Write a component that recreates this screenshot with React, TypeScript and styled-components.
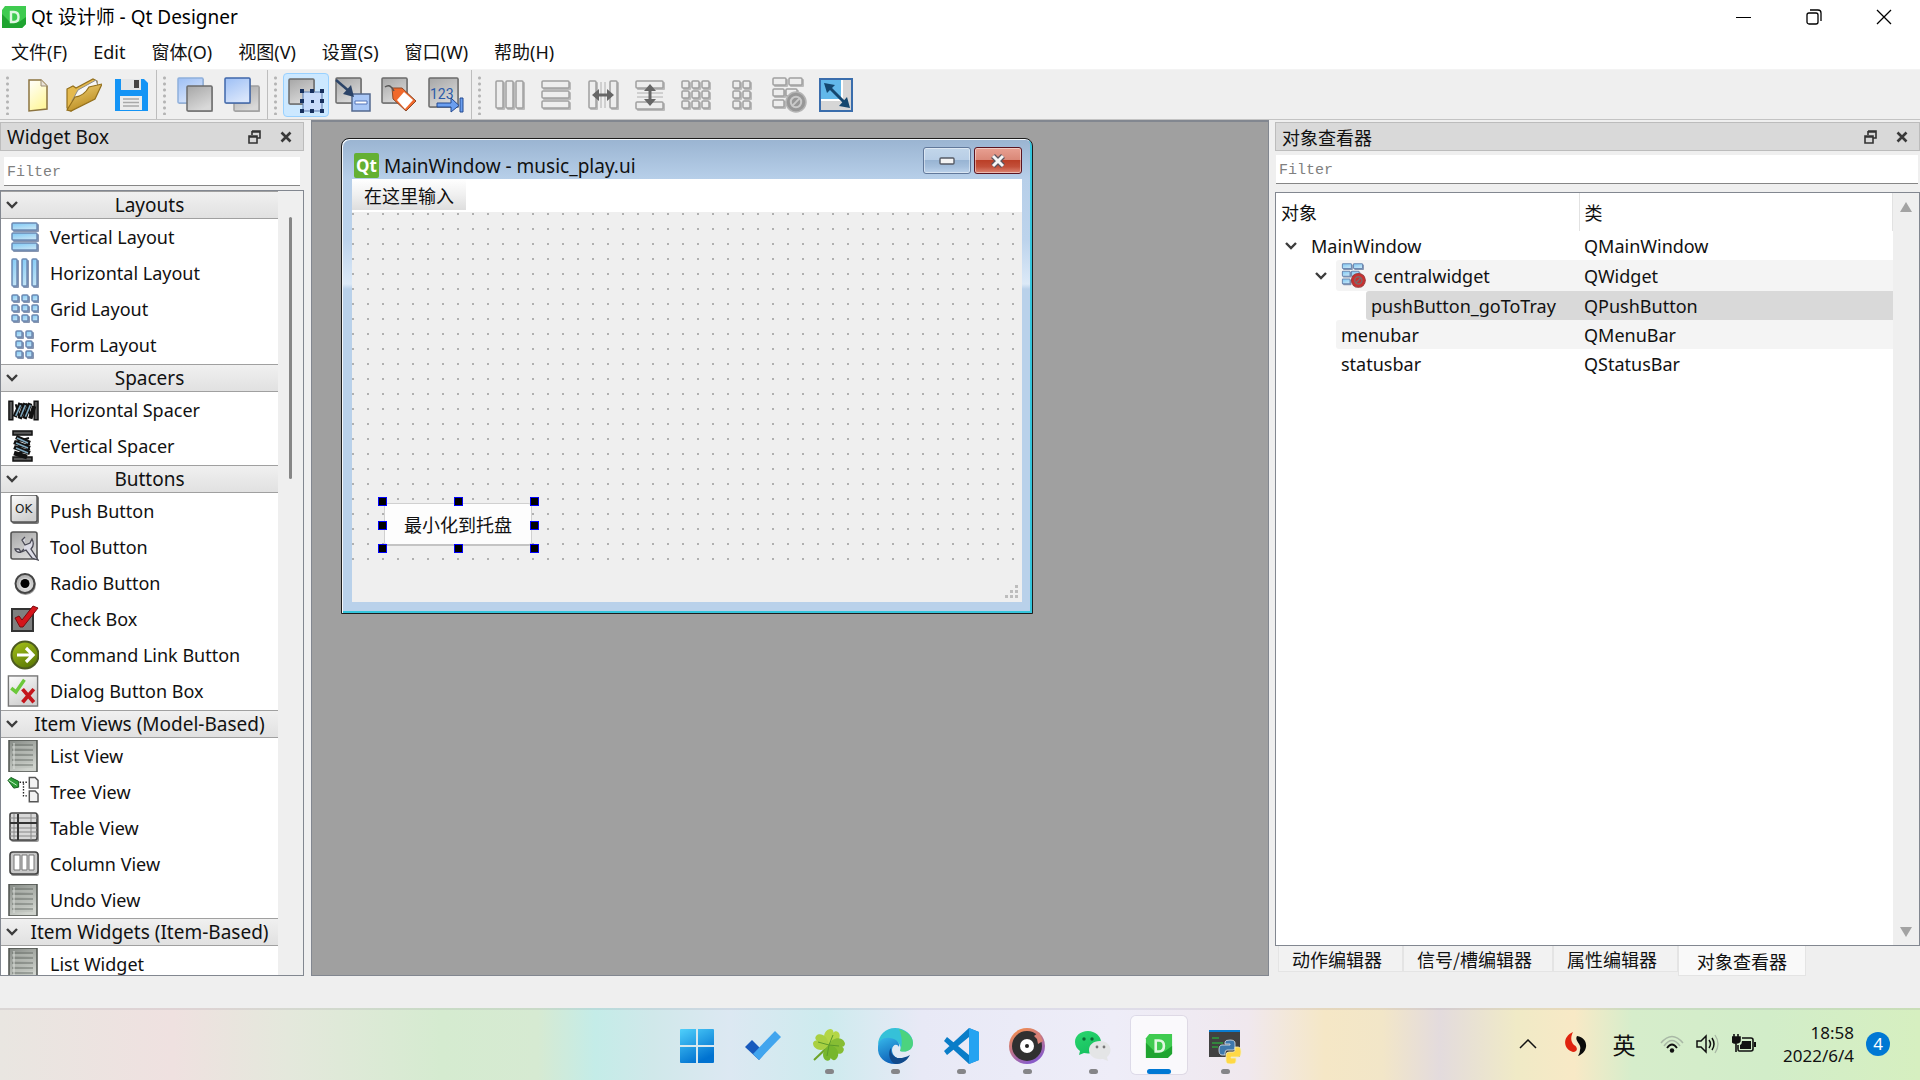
import React from "react";
import styled, { createGlobalStyle, css } from "styled-components";

const uiFont = `"Noto Sans", "Noto Sans CJK SC", sans-serif`;
const cjkFont = `"Noto Sans CJK SC", "Noto Sans", sans-serif`;

const GlobalStyle = createGlobalStyle`
  * { box-sizing: border-box; }
  body { margin: 0; font-family: ${uiFont}; font-size: 18px; line-height: 24px; color: #111; background: #efefef; }
  button, input { font: inherit; color: inherit; margin: 0; padding: 0; border: 0; background: none; }
  ul { list-style: none; margin: 0; padding: 0; }
  svg { display: block; flex: none; }
`;

const Screen = styled.div`
  display: flex;
  flex-direction: column;
  height: 100vh;
  overflow: hidden;
`;

/* ---------- title bar and menu ---------- */

const TitleBar = styled.header`
  display: flex;
  align-items: center;
  flex: none;
  height: 34px;
  padding: 0 1px 0 2px;
  background: #fff;
`;
const AppTitle = styled.h1`
  flex: 1;
  margin: 0 0 0 5px;
  font-size: 19px;
  font-weight: 400;
  color: #000;
`;
const CaptionButton = styled.button`
  display: grid;
  place-items: center;
  width: 70px;
  height: 34px;
`;
const MenuBar = styled.nav`
  display: flex;
  gap: 4px;
  flex: none;
  height: 36px;
  background: #fff;
  border-bottom: 1px solid #f3f3f3;
`;
const MenuButton = styled.button`
  padding: 0 11px;
  white-space: nowrap;
`;

/* ---------- tool bars ---------- */

const ToolBarRow = styled.div`
  display: flex;
  flex: none;
  height: 50px;
  background: #efefef;
  border-bottom: 1px solid #c3c3c3;
`;
const ToolGroup = styled.div<{ $width: number; $last?: boolean }>`
  display: flex;
  align-items: center;
  justify-content: space-between;
  width: ${(p) => p.$width}px;
  padding: 0 2px 0 6px;
  ${(p) => !p.$last && css`border-right: 1px solid #bdbdbd;`}
`;
const Grip = styled.span`
  width: 3px;
  height: 40px;
  margin-right: 5px;
  background: radial-gradient(circle, #b4b4b4 1px, transparent 2px) 0 0 / 3px 6px;
`;
const ToolButton = styled.button<{ $active?: boolean }>`
  display: grid;
  place-items: center;
  width: 46px;
  height: 44px;
  border: 1px solid transparent;
  border-radius: 4px;
  ${(p) => p.$active && css`background: #cce8ff; border-color: #99d1ff;`}
`;

/* ---------- docks ---------- */

const Workspace = styled.main`
  display: flex;
  flex: 1;
  min-height: 0;
  padding-bottom: 32px;
`;
const Dock = styled.aside<{ $width: number }>`
  display: flex;
  flex-direction: column;
  flex: none;
  width: ${(p) => p.$width}px;
  padding-top: 2px;
`;
const DockTitle = styled.div`
  display: flex;
  align-items: center;
  flex: none;
  height: 29px;
  padding: 0 2px 0 6px;
  background: #d9d9d9;
  border: 1px solid #bcbcbc;
`;
const DockName = styled.h2<{ $cjk?: boolean }>`
  flex: 1;
  margin: 0;
  font-size: ${(p) => (p.$cjk ? 18 : 19)}px;
  font-weight: 400;
  font-family: ${(p) => (p.$cjk ? cjkFont : uiFont)};
`;
const DockButton = styled.button`
  display: grid;
  place-items: center;
  width: 31px;
  height: 24px;
`;
const Filter = styled.input<{ $left?: boolean }>`
  flex: none;
  height: 29px;
  margin: ${(p) => (p.$left ? "6px 4px 4px" : "4px 2px 8px 1px")};
  padding: 2px 3px 0;
  background: #fff;
  border-bottom: 1px solid #868686;
  font-family: "Liberation Mono", monospace;
  font-size: 15px;
  &::placeholder { color: #808080; opacity: 1; }
`;
const Frame = styled.div`
  display: flex;
  flex: 1;
  min-height: 0;
  border: 1px solid #828790;
  background: #fff;
`;

const Categories = styled.div`
  flex: 1;
  overflow: hidden;
`;
const Category = styled.button`
  display: grid;
  grid-template-columns: 20px 1fr;
  align-items: center;
  width: 100%;
  height: 28px;
  padding: 0 4px;
  background: linear-gradient(#f0f0f0, #e1e1e1);
  border: solid #a0a0a0;
  border-width: 1px 0;
  font-size: 19px;
  white-space: nowrap;
`;
const WidgetList = styled.ul<{ $gap?: boolean }>`
  padding-bottom: ${(p) => (p.$gap ? 1 : 0)}px;
`;
const WidgetItem = styled.li`
  display: flex;
  align-items: center;
  gap: 11px;
  height: 36px;
  padding-left: 6px;
  white-space: nowrap;
`;
const ThinScroll = styled.div`
  width: 25px;
  padding: 26px 0 0 11px;
  background: #efefef;
  &::before { content: ""; display: block; width: 3px; height: 262px; border-radius: 2px; background: #868686; }
`;

/* ---------- form window ---------- */

const Mdi = styled.section`
  position: relative;
  flex: 1;
  margin: 0 6px 0 7px;
  background: #a0a0a0;
  border: 1px solid #828790;
  border-top-width: 2px;
`;
const FormWindow = styled.article`
  position: absolute;
  left: 29px;
  top: 16px;
  display: flex;
  flex-direction: column;
  width: 692px;
  height: 476px;
  padding: 0 10px 11px;
  border: 1px solid #1c1c1c;
  border-radius: 8px 8px 0 0;
  background: linear-gradient(#9ab4d1 0, #b7cfe9 40px, #bcd3ec 100px, #dce9f7 145px, #b9d1ea 150px);
  box-shadow: inset 1px 1px #f4f8fc, inset -2px -2px #35c5dc;
`;
const FormTitle = styled.header`
  display: flex;
  align-items: flex-end;
  flex: none;
  height: 40px;
  padding: 0 0 1px 2px;
`;
const FormName = styled.h3`
  flex: 1;
  margin: 0 0 0 5px;
  font-size: 19px;
  font-weight: 400;
`;
const FormButton = styled.button<{ $close?: boolean }>`
  display: grid;
  place-items: center;
  align-self: flex-start;
  width: 48px;
  height: 27px;
  margin: 8px 0 0 3px;
  border: 1px solid ${(p) => (p.$close ? "#5b1420" : "#61789a")};
  border-radius: 3px;
  box-shadow: inset 0 0 0 1px rgba(255, 255, 255, 0.45);
  background: ${(p) =>
    p.$close
      ? "linear-gradient(#e8a092, #da8878 46%, #bb3f27 50%, #c3503a 75%, #dd8674)"
      : "linear-gradient(#c2d6ea, #b8cee6 46%, #98b4d3 50%, #a5bfdc 75%, #bdd3eb)"};
`;
const FormMenu = styled.nav`
  display: flex;
  flex: none;
  height: 33px;
  background: #fff;
`;
const FormMenuItem = styled.button`
  height: 31px;
  padding: 0 12px;
  font-family: ${cjkFont};
  background: linear-gradient(#fff, #f0f0f0 50%, #dedede);
`;
const Canvas = styled.div`
  position: relative;
  flex: 1;
  background: #efefef radial-gradient(circle at 1px 1px, #b0b0b0 1px, transparent 1px) 0 1px / 15px 15px;
`;
const FormStatus = styled.footer`
  display: flex;
  align-items: flex-end;
  justify-content: flex-end;
  flex: none;
  height: 41px;
  padding: 3px;
  background: #efefef;
`;
const PlacedWidget = styled.div`
  position: absolute;
  left: 30px;
  top: 289px;
  display: grid;
  width: 152px;
  height: 47px;
  padding: 2px;
`;
const FormPushButton = styled.button`
  background: #fdfdfd;
  border: 1px solid #d0d0d0;
  border-bottom: 2px solid #c4c4c4;
  border-radius: 4px;
  font-family: ${cjkFont};
`;
const Handle = styled.i<{ $x: string; $y: string }>`
  position: absolute;
  left: ${(p) => p.$x};
  top: ${(p) => p.$y};
  width: 9px;
  height: 9px;
  margin: -4px;
  background: #000;
  border: 1px solid #0000ff;
`;

/* ---------- object inspector ---------- */

const TreeArea = styled.div`
  flex: 1;
`;
const Tree = styled.table`
  width: 100%;
  border-collapse: collapse;
  table-layout: fixed;
  th, td { padding: 0 0 0 5px; text-align: left; font-weight: 400; white-space: nowrap; }
  th { height: 38px; font-family: ${cjkFont}; border-right: 1px solid #e2e2e2; }
  th:first-child { width: 303px; }
`;
const TreeRow = styled.tr<{ $tint?: string; $tall?: boolean }>`
  height: ${(p) => (p.$tall ? 31 : 29)}px;
  td:first-child { padding: 0; }
  td:last-child { background: ${(p) => p.$tint ?? "transparent"}; }
`;
const NodeCell = styled.div<{ $depth: number; $tall?: boolean }>`
  display: flex;
  height: ${(p) => (p.$tall ? 31 : 29)}px;
  padding-left: ${(p) => p.$depth * 30}px;
`;
const Toggle = styled.button`
  display: grid;
  place-items: center;
  width: 30px;
`;
const NodeLabel = styled.span<{ $tint?: string }>`
  display: flex;
  align-items: center;
  gap: 8px;
  flex: 1;
  padding-left: 5px;
  border-radius: 3px 0 0 3px;
  background: ${(p) => p.$tint ?? "transparent"};
`;
const ArrowScroll = styled.div`
  display: flex;
  flex-direction: column;
  justify-content: space-between;
  align-items: center;
  width: 26px;
  padding: 9px 0 8px;
  background: #efefef;
`;
const Tabs = styled.div`
  display: flex;
  align-items: flex-start;
  flex: none;
  height: 30px;
  padding-left: 3px;
`;
const Tab = styled.button<{ $on?: boolean }>`
  height: ${(p) => (p.$on ? 30 : 26)}px;
  padding: ${(p) => (p.$on ? "0 18px" : "0 20px 0 13px")};
  background: ${(p) => (p.$on ? "#f9f9f9" : "#f2f2f2")};
  border: 1px solid #e4e4e4;
  border-top: 0;
  font-family: ${cjkFont};
  white-space: nowrap;
`;

/* ---------- task bar ---------- */

const TaskBar = styled.footer`
  display: grid;
  grid-template-columns: 1fr auto 1fr;
  flex: none;
  height: 72px;
  border-top: 2px solid rgba(90, 80, 110, 0.1);
  background: linear-gradient(90deg, #e9e6e1 0, #efe1e0 9%, #e4e8dc 15%, #d5ebd0 23%, #d6ead2 28%, #c4ece8 31%, #d0e8ea 34%, #dce8f2 38%, #cdebee 43%, #e8e9f6 48%, #eeedf8 58%, #f0e8ee 65%, #f5e7c6 69%, #f2e6c8 72%, #e3dbdd 75%, #f0eac6 79%, #f8e9c6 82%, #d6edcb 85%, #d2edc9 92%, #d6efc0 100%);
  background-origin: border-box;
`;
const Pinned = styled.div`
  display: flex;
  gap: 10px;
  padding: 6px 0 0 2px;
`;
const TaskButton = styled.button<{ $active?: boolean; $running?: boolean }>`
  display: flex;
  flex-direction: column;
  align-items: center;
  justify-content: space-between;
  width: 56px;
  height: 58px;
  padding-top: 12px;
  border-radius: 5px;
  ${(p) => p.$active && css`background: rgba(255, 255, 255, 0.7); box-shadow: 0 0 0 1px rgba(120, 110, 150, 0.14);`}
  &::after {
    content: "";
    width: ${(p) => (p.$active ? 24 : 9)}px;
    height: 5px;
    border-radius: 3px;
    background: ${(p) => (p.$active ? "#0078d4" : p.$running ? "#858588" : "transparent")};
  }
`;
const Tray = styled.div`
  display: flex;
  align-items: center;
  justify-content: flex-end;
  padding: 0 30px 2px 0;
`;
const TrayButton = styled.button<{ $w: number }>`
  display: grid;
  place-items: center;
  width: ${(p) => p.$w}px;
  height: 48px;
  font-family: ${cjkFont};
  font-size: 23px;
`;
const Clock = styled.time`
  width: 86px;
  text-align: right;
  font-size: 17px;
  line-height: 23px;
`;
const Badge = styled.span`
  width: 24px;
  height: 24px;
  margin-left: 12px;
  border-radius: 50%;
  background: #0078d4;
  color: #fff;
  font-size: 17px;
  line-height: 24px;
  text-align: center;
`;

/* ---------- drawings ---------- */

const Svg = ({ w = 32, h = w, box, children }: { w?: number; h?: number; box?: string; children: React.ReactNode }) => (
  <svg width={w} height={h} viewBox={box ?? `0 0 ${w} ${h}`} fill="none" aria-hidden="true">{children}</svg>
);

const Swatches = styled.svg`
  position: absolute;
`;
const Gradients = () => (
  <Swatches width="0" height="0" aria-hidden="true">
    <defs>
      {[
        ["gGrey", "#a6a6a6", "#d9d9d9"],
        ["gBlue", "#9dbff5", "#d8e5fb"],
        ["gSky", "#7cc8f5", "#c3e4f6"],
        ["gPale", "#fdfdfd", "#cfcfcf"],
        ["gDark", "#858a85", "#cfd3cd"],
        ["gPaper", "#ffffff", "#fff7a0"],
        ["gFold", "#f3d57c", "#b98a1e"],
        ["gWin", "#4fd0fb", "#0072d0"],
        ["gLime", "#a9c51c", "#5f7d05"],
        ["gRing", "#ff9240", "#8a5cc8"],
        ["gEdge", "#37b8ea", "#0b5cb5"],
        ["gMint", "#2ad66e", "#16c060"],
      ].map(([id, a, b]) => (
        <linearGradient key={id} id={id} x1="0" y1="0" x2="0.5" y2="1">
          <stop offset="0" stopColor={a} />
          <stop offset="1" stopColor={b} />
        </linearGradient>
      ))}
    </defs>
  </Swatches>
);

const DesignerLogo = ({ w, h }: { w: number; h: number }) => (
  <Svg w={w} h={h} box="0 0 24 22">
    <path d="M3 0H24V18L20 22H0V4Z" fill="#3fcb50" />
    <path d="M0 8L8 16H17L24 11V18L20 22H0Z" fill="#1fa430" />
    <path d="M9 6H12Q16.500 6 16.500 11T12 16H9Z" stroke="#dff7e0" strokeWidth="2.400" />
  </Svg>
);

const Chevron = () => (
  <Svg w={14} h={10}><path d="M2 2L7 7L12 2" stroke="#3c3c3c" strokeWidth="2.400" /></Svg>
);
const FloatIcon = () => (
  <Svg w={13} h={14}>
    <path d="M4 1H12V8H9M4 1V5M4 2H12M1 6H9V13H1ZM1 7H9" stroke="#333" strokeWidth="1.600" />
  </Svg>
);
const CloseIcon = () => (
  <Svg w={12} h={12}><path d="M1.500 1.500L10.500 10.500M10.500 1.500L1.500 10.500" stroke="#3a3a3a" strokeWidth="2.600" /></Svg>
);

type Cell = [number, number, number, number];
const cols: Cell[] = [[2, 2, 7, 27], [12, 2, 7, 27], [22, 2, 7, 27]];
const rows: Cell[] = [[2, 2, 27, 7], [2, 12, 27, 7], [2, 22, 27, 7]];
const grid: Cell[] = [2, 12, 22].flatMap((y) => [2, 12, 22].map((x): Cell => [x, y, 7, 7]));
const form: Cell[] = [2, 12, 22].flatMap((y) => [6, 16].map((x): Cell => [x, y, 7, 7]));
const broken: Cell[] = [[2, 1, 13, 7], [18, 1, 13, 7], [2, 12, 11, 7], [15, 12, 11, 7], [2, 23, 11, 7]];

const Cells = ({ list, blue }: { list: Cell[]; blue?: boolean }) => (
  <>
    {list.map(([x, y, w, h]) => (
      <React.Fragment key={`${x}-${y}`}>
        <rect x={x + 1} y={y + 1} width={w + 1} height={h + 1} rx="1" fill={blue ? "#5f7397" : "#a8a8a8"} opacity="0.75" />
        <rect x={x} y={y} width={w} height={h} rx="1" fill={blue ? "url(#gSky)" : "#ededed"} stroke={blue ? "#6c89b2" : "#a0a0a0"} strokeWidth="1.500" />
      </React.Fragment>
    ))}
  </>
);
const Stop = ({ x, y, r, red }: { x: number; y: number; r: number; red?: boolean }) => (
  <>
    <circle cx={x} cy={y} r={r} fill={red ? "#cc3030" : "#979797"} stroke={red ? "#9b3c3c" : "#b4b4b4"} strokeWidth="1.500" />
    <circle cx={x} cy={y} r={r * 0.52} stroke={red ? "#7d6a6a" : "#c9c9c9"} strokeWidth="2" />
    <path d={`M${x - r / 3} ${y + r / 3}L${x + r / 3} ${y - r / 3}`} stroke={red ? "#7d6a6a" : "#c9c9c9"} strokeWidth="2" />
  </>
);
const Box = ({ x, y, s, blue, dim }: { x: number; y: number; s: number; blue?: boolean; dim?: boolean }) => (
  <>
    <rect x={x + 1} y={y + 1} width={s} height={s} fill="#777" opacity="0.5" />
    <rect x={x} y={y} width={s} height={s} rx="1" fill={blue ? "url(#gBlue)" : "url(#gGrey)"} stroke={blue ? (dim ? "#8fb0dc" : "#3f67ab") : dim ? "#a0a0a0" : "#6b6b6b"} strokeWidth="1.500" />
  </>
);
const corners = [[0, 0], [10, 0], [20, 0], [0, 10], [20, 10], [0, 20], [10, 20], [20, 20]];

const icons = {
  newFile: (
    <Svg w={36}><path d="M9 3H21L27 9V32L9 34Z" fill="url(#gPaper)" stroke="#8c7440" strokeWidth="1.500" /><path d="M21 3V9H27" fill="#e8e2d8" stroke="#9a8c74" /></Svg>
  ),
  open: (
    <Svg w={36}>
      <path d="M1 12L7 9L10 11L27 2L31 4V14L5 34L1 31Z" fill="#e4b94e" stroke="#94701c" strokeWidth="1.200" />
      <path d="M6 24L12 13L30 3L32 9L12 27Z" fill="#f7f7f7" stroke="#8d8d8d" />
      <path d="M1 33L9 20Q18 19 23 10L36 7L29 22L5 34Z" fill="url(#gFold)" stroke="#94701c" strokeWidth="1.200" />
    </Svg>
  ),
  save: (
    <Svg w={36}>
      <path d="M2 2H31L35 6V34H2Z" fill="#1494f5" />
      <path d="M8 2H28V13H8Z" fill="#e3e5e7" /><path d="M21 3H26V11H21Z" fill="#444" />
      <path d="M7 19H29V33H7Z" fill="#ececec" /><path d="M10 22H26M10 25.500H26M10 29H26" stroke="#a8a8a8" strokeWidth="1.600" />
    </Svg>
  ),
  back: <Svg w={36}><Box x={1} y={1} s={25} blue dim /><Box x={10} y={9} s={25} /></Svg>,
  front: <Svg w={36}><Box x={10} y={9} s={25} dim /><Box x={1} y={1} s={25} blue /></Svg>,
  editWidgets: (
    <Svg w={36}>
      <Box x={1} y={2} s={25} />
      <rect x="15" y="15" width="19" height="19" fill="#c9dcfb" stroke="#5c7cae" />
      {corners.map(([x, y]) => <rect key={`${x}-${y}`} x={12 + x} y={12 + y} width="4" height="4" fill="#17305e" />)}
      <rect x="23" y="23" width="3" height="3" fill="#17305e" />
    </Svg>
  ),
  editSignals: (
    <Svg w={36}>
      <Box x={1} y={1} s={25} /><rect x="17" y="17" width="18" height="17" fill="#a9c7f6" stroke="#54698f" strokeWidth="1.500" /><path d="M20 24H32V27H20Z" fill="#fff" stroke="#5575b8" />
      <path d="M1 3L15 15" stroke="#2c4468" strokeWidth="2.500" /><path d="M19 20L8 17L16 8Z" fill="#2c4468" />
    </Svg>
  ),
  editBuddies: (
    <Svg w={36}>
      <Box x={1} y={1} s={25} /><path d="M11 11L21 11L35 24L25 34L12 22Z" fill="#f0692c" stroke="#8d4a2a" /><path d="M23 15L32 23L24 32L16 23Z" fill="#fff" />
      <path d="M4 10Q9 6 13 14" stroke="#555" strokeWidth="1.500" />
    </Svg>
  ),
  editTabs: (
    <Svg w={36}>
      <Box x={1} y={1} s={29} /><text x="2" y="22" fontFamily="Roboto" fontSize="14" fill="#2c5ba8">123</text>
      <path d="M9 26H23V21L31 28.500L23 35V30H9Z" fill="#6b9ff0" stroke="#23488f" /><path d="M32 21H35V35H32Z" fill="#6b9ff0" stroke="#23488f" />
    </Svg>
  ),
  layH: <Svg w={32}><Cells list={cols} /></Svg>,
  layV: <Svg w={32}><Cells list={rows} /></Svg>,
  splitH: (
    <Svg w={32}><Cells list={[[2, 2, 7, 27], [23, 2, 7, 27]]} /><path d="M14 3V29M18 3V29" stroke="#b0b0b0" /><path d="M8 16H24" stroke="#666" strokeWidth="3" /><path d="M12 10V22L5 16ZM20 10V22L27 16Z" fill="#666" /></Svg>
  ),
  splitV: (
    <Svg w={32}><Cells list={[[2, 2, 27, 7], [2, 23, 27, 7]]} /><path d="M3 14H29M3 18H29" stroke="#b0b0b0" /><path d="M16 8V24" stroke="#666" strokeWidth="3" /><path d="M10 12H22L16 5ZM10 20H22L16 27Z" fill="#666" /></Svg>
  ),
  layGrid: <Svg w={32}><Cells list={grid} /></Svg>,
  layForm: <Svg w={32}><Cells list={form} /></Svg>,
  breakLay: <Svg w={36}><Cells list={broken} /><Stop x={25} y={25} r={10} /></Svg>,
  adjust: (
    <Svg w={36}>
      <rect x="2" y="2" width="32" height="32" fill="#d6d6d6" stroke="#3a6dac" strokeWidth="2" /><rect x="3" y="3" width="20" height="19" fill="#62b8ea" /><path d="M3 23H24V3" stroke="#fff" strokeWidth="2" />
      <path d="M10 9L28 27" stroke="#14476f" strokeWidth="3" /><path d="M6 6L17 8L9 16ZM32 31L21 29L29 20Z" fill="#14476f" />
    </Svg>
  ),
};

const Spring = () => (
  <>
    <path d="M2 6H6V25H2ZM28 6H32V25H28Z" fill="#555" stroke="#111" strokeWidth="1.500" />
    <path d="M8 22L14 8M13 24L19 8M18 24L24 8M24 24L28 11" stroke="#111" strokeWidth="4.500" />
    <path d="M9 9L13 23M15 8L19 22M20 8L25 22" stroke="#111" strokeWidth="2" />
    <path d="M9 21L14 10M14 22L19 10M19 22L24 10" stroke="#7fa9c0" strokeWidth="1.600" />
  </>
);
const ListIcon = (
  <Svg w={32}>
    <rect x="2" y="0" width="28" height="32" fill="url(#gDark)" stroke="#4c504c" strokeWidth="1.500" />
    <path d="M5 5H26M5 10H26M5 15H26M5 20H26M5 25H26" stroke="#6b706b" /><path d="M5 7H26M5 12H26M5 17H26M5 22H26M5 27H26" stroke="#b9beb8" /><path d="M7 3V29" stroke="#dde0dc" />
  </Svg>
);
const widgetIcons: Record<string, React.ReactNode> = {
  v: <Svg w={32}><Cells blue list={rows.map(([x, y, w, h]): Cell => [x + 3, y, w - 2, h])} /></Svg>,
  h: <Svg w={32}><Cells blue list={cols.map(([x, y, w, h]): Cell => [x + 3, y, w - 2, h])} /></Svg>,
  g: <Svg w={32}><Cells blue list={grid.map(([x, y, w, h]): Cell => [x + 3, y, w - 1, h - 1])} /></Svg>,
  f: <Svg w={32}><Cells blue list={form.map(([x, y, w, h]): Cell => [x + 3, y, w - 1, h - 1])} /></Svg>,
  hs: <Svg w={32} box="0 -1 33 32"><Spring /></Svg>,
  vs: <Svg w={32}><g transform="translate(31 -1) rotate(90)"><Spring /></g></Svg>,
  push: (
    <Svg w={32}><rect x="5" y="1" width="27" height="28" rx="2" fill="#777" /><rect x="4" y="0" width="26" height="27" rx="2" fill="url(#gPale)" stroke="#555" strokeWidth="1.400" /><text x="8" y="18" fontFamily="DejaVu Sans" fontSize="12" fill="#222">OK</text></Svg>
  ),
  tool: (
    <Svg w={32}><rect x="4" y="1" width="26" height="27" rx="2" fill="url(#gGrey)" stroke="#555" strokeWidth="1.600" /><path d="M18 6L15 9L18 14L23 12L25 8Q28 14 24 18L31 29L25 27L19 19Q10 24 8 18L12 18L14 21L17 18" fill="#dcdce6" stroke="#4a4a55" strokeWidth="1.300" /></Svg>
  ),
  radio: <Svg w={32}><circle cx="18.500" cy="17.500" r="10.500" fill="#999" /><circle cx="18" cy="16.500" r="9.500" fill="url(#gGrey)" stroke="#444" strokeWidth="2" /><circle cx="18" cy="16.500" r="6" fill="#fff" opacity="0.3" /><circle cx="18" cy="16.500" r="4.500" fill="#000" /></Svg>,
  check: <Svg w={32}><rect x="5" y="6" width="21" height="22" fill="#7f7f7f" stroke="#333" strokeWidth="2" /><path d="M8 15L12 13L15 17L26 3L31 5L16 24H13Z" fill="#d5151b" stroke="#7a0c10" /></Svg>,
  link: <Svg w={32}><circle cx="18" cy="16" r="13.500" fill="url(#gLime)" stroke="#4c5a20" strokeWidth="2" /><path d="M10 16H25M19 9L26 16L19 23" stroke="#fff" strokeWidth="3.200" /></Svg>,
  dialog: <Svg w={32} box="0 0 33 34"><rect x="1" y="1" width="31" height="32" fill="url(#gPale)" stroke="#777" strokeWidth="1.500" /><path d="M4 14L9 18L18 5" stroke="#6cc83a" strokeWidth="3.600" /><path d="M16 15L28 29M28 15L16 29" stroke="#c4161c" strokeWidth="4" /></Svg>,
  list: ListIcon,
  tree: (
    <Svg w={32} box="0 0 33 32">
      <path d="M1 4L4 1L12 5V11L7 12Z" fill="#2c9c35" stroke="#145a1c" /><path d="M2 4L10 9" stroke="#c7f0c8" />
      <path d="M13 6H22M17 7V20H22" stroke="#222" strokeWidth="1.400" strokeDasharray="1.500 1.500" />
      <path d="M23 1H29L32 4V12H23ZM23 15H29L32 18V26H23Z" fill="#f2f2f2" stroke="#555" strokeWidth="1.500" />
    </Svg>
  ),
  table: <Svg w={32}><rect x="4" y="2" width="28" height="28" rx="2" fill="#999" /><rect x="3" y="1" width="27" height="27" rx="2" fill="#d8d8d8" stroke="#444" strokeWidth="1.600" /><path d="M3 6H30M3 16H30M3 20H30M3 24H30M24 2V28M7 2V28" stroke="#888" /><path d="M3 11H30M11 2V28" stroke="#333" strokeWidth="2" /></Svg>,
  column: <Svg w={32}><rect x="4" y="5" width="28" height="23" rx="2" fill="#999" /><rect x="3" y="4" width="28" height="22" rx="3" fill="#c8c8c8" stroke="#444" strokeWidth="1.600" /><path d="M7 7H13V22H7ZM15 7H20V22H15ZM22 7H27V22H22Z" fill="#fff" stroke="#777" /></Svg>,
};

const lobe = "M0 0C-9 -2 -10 -12 -5 -15C-2 -17 0 -14 0 -13C1 -16 4 -16 6 -14C9 -10 7 -4 0 0Z";
const taskIcons: Record<string, React.ReactNode> = {
  Start: <Svg w={36}><path d="M1 2Q1 1 2 1H17V17H1ZM19 1H34Q35 1 35 2V17H19ZM1 19H17V35H2Q1 35 1 34ZM19 19H35V34Q35 35 34 35H19Z" fill="url(#gWin)" /></Svg>,
  "To Do": <Svg w={36}><path d="M0 19L7 12L20 25L14 32Z" fill="#185abd" /><path d="M8 26L30 3L36 9L14 32Z" fill="#41a5ee" /></Svg>,
  Clover: (
    <Svg w={36}>
      <path d="M18 17Q12 24 3 32" stroke="#6fa42a" strokeWidth="2" />
      <g transform="translate(18 17)">
        <path d={lobe} fill="#b4d646" transform="rotate(20)" />
        <path d={lobe} fill="#a9d042" transform="rotate(-70)" />
        <path d={lobe} fill="#86bd33" transform="rotate(98)" />
        <path d={lobe} fill="#76b62c" transform="rotate(172)" />
      </g>
      <path d="M18 17L22 7M18 17L7 14M18 17L28 18M18 17L16 28" stroke="#5b9a2b" />
    </Svg>
  ),
  Edge: (
    <Svg w={36}>
      <path d="M1 17C1 7 9 0 18 0C28 0 36 7 36 15C36 22 29 25 23 23C25 19 22 13 16 12C9 11 3 12 1 17Z" fill="#35c1d8" />
      <path d="M22 1C30 3 36 9 36 15C36 22 29 25 23 23C25 19 26 10 22 1Z" fill="#54d860" opacity="0.75" />
      <path d="M1 19C1 12 7 9 13 10C20 11 23 15 22 19C20 15 15 17 15 22C15 29 23 33 30 31C26 35 21 36 18 36C8 36 0 29 1 19Z" fill="url(#gEdge)" />
      <path d="M14 20C13 28 20 34 33 27C30 33 24 36 20 36C13 36 10 25 14 20Z" fill="#114a8b" />
    </Svg>
  ),
  "VS Code": (
    <Svg w={36}><path d="M26 0L36 4V32L26 36L1 13L4 9L26 27V9L4 27L1 23Z" fill="#0a7dc8" /><path d="M26 0L36 4V32L26 36Z" fill="#25a3f1" /></Svg>
  ),
  Music: (
    <Svg w={36}><circle cx="18" cy="18" r="18" fill="url(#gRing)" /><circle cx="18" cy="18" r="15" fill="#303030" /><circle cx="18" cy="18" r="7" fill="#fff" /><circle cx="18" cy="18" r="2" fill="#222" /><path d="M25 8L30 4L32 9L34 13L29 16L28 11Z" fill="#d88075" /></Svg>
  ),
  WeChat: (
    <Svg w={36}>
      <path d="M13 3C5 3 0 8 0 14C0 18 2 21 5 23L4 27L9 25C20 27 26 21 26 14C26 8 20 3 13 3Z" fill="url(#gMint)" /><circle cx="9" cy="11" r="1.700" fill="#0b6a35" /><circle cx="17" cy="11" r="1.700" fill="#0b6a35" />
      <path d="M25 13C18 13 14 17 14 22C14 28 20 32 28 31L33 33L32 29C39 23 35 13 25 13Z" fill="#e4e5e6" /><circle cx="22" cy="19" r="1.400" fill="#777" /><circle cx="29" cy="19" r="1.400" fill="#777" />
    </Svg>
  ),
  Designer: <Svg w={36}><g transform="translate(3 6)"><DesignerLogo w={30} h={24} /></g></Svg>,
  Python: (
    <Svg w={36}>
      <path d="M2 2H33V29H2Z" fill="#414141" /><path d="M2 2H33V4H2Z" fill="#0a7bd0" /><path d="M5 10H12M5 15H16M5 19H11" stroke="#2f9c3c" strokeWidth="1.500" />
      <path d="M18 14Q18 12 23 12Q28 12 28 15V20Q28 22 26 22H20Q18 22 18 25V27H15Q12 27 12 22Q12 17 15 17H23V16H18Z" fill="#3f78ab" stroke="#dfe8f0" strokeWidth="0.800" />
      <path d="M28 19H31Q34 19 34 24Q34 29 31 29H24V30H29V33Q29 36 24 36Q19 36 19 33V27Q19 24 22 24H26Q28 24 28 22Z" fill="#ffd845" stroke="#f4eebc" strokeWidth="0.800" />
    </Svg>
  ),
};

/* ---------- data ---------- */

const menus = ["文件(F)", "Edit", "窗体(O)", "视图(V)", "设置(S)", "窗口(W)", "帮助(H)"];

const toolGroups: { width: number; items: [string, keyof typeof icons][] }[] = [
  { width: 157, items: [["新建", "newFile"], ["打开", "open"], ["保存", "save"]] },
  { width: 111, items: [["放到后面", "back"], ["放到前面", "front"]] },
  { width: 204, items: [["编辑控件", "editWidgets"], ["编辑信号/槽", "editSignals"], ["编辑伙伴", "editBuddies"], ["编辑Tab顺序", "editTabs"]] },
  {
    width: 389,
    items: [["水平布局", "layH"], ["垂直布局", "layV"], ["水平分裂器", "splitH"], ["垂直分裂器", "splitV"], ["栅格布局", "layGrid"], ["表单布局", "layForm"], ["打破布局", "breakLay"], ["调整大小", "adjust"]],
  },
];

const categories: { name: string; items: [string, string][] }[] = [
  { name: "Layouts", items: [["v", "Vertical Layout"], ["h", "Horizontal Layout"], ["g", "Grid Layout"], ["f", "Form Layout"]] },
  { name: "Spacers", items: [["hs", "Horizontal Spacer"], ["vs", "Vertical Spacer"]] },
  { name: "Buttons", items: [["push", "Push Button"], ["tool", "Tool Button"], ["radio", "Radio Button"], ["check", "Check Box"], ["link", "Command Link Button"], ["dialog", "Dialog Button Box"]] },
  { name: "Item Views (Model-Based)", items: [["list", "List View"], ["tree", "Tree View"], ["table", "Table View"], ["column", "Column View"], ["list", "Undo View"]] },
  { name: "Item Widgets (Item-Based)", items: [["list", "List Widget"]] },
];

type Node = { name: string; cls: string; depth: number; open?: boolean; icon?: boolean; tint?: string };
const nodes: Node[] = [
  { name: "MainWindow", cls: "QMainWindow", depth: 0, open: true },
  { name: "centralwidget", cls: "QWidget", depth: 1, open: true, icon: true, tint: "#f4f4f4" },
  { name: "pushButton_goToTray", cls: "QPushButton", depth: 2, tint: "#d9d9d9" },
  { name: "menubar", cls: "QMenuBar", depth: 1, tint: "#f4f4f4" },
  { name: "statusbar", cls: "QStatusBar", depth: 1 },
];

const spots: [string, string][] = [
  ["0", "0"], ["50%", "0"], ["100%", "0"],
  ["0", "50%"], ["100%", "50%"],
  ["0", "100%"], ["50%", "100%"], ["100%", "100%"],
];

const DockHeader = ({ name, cjk }: { name: string; cjk?: boolean }) => (
  <DockTitle>
    <DockName $cjk={cjk}>{name}</DockName>
    <DockButton aria-label="浮动"><FloatIcon /></DockButton>
    <DockButton aria-label="关闭"><CloseIcon /></DockButton>
  </DockTitle>
);

export default function App() {
  return (
    <Screen>
      <GlobalStyle />
      <Gradients />
      <TitleBar>
        <DesignerLogo w={24} h={22} />
        <AppTitle>Qt 设计师 - Qt Designer</AppTitle>
        <CaptionButton aria-label="最小化"><Svg w={16}><path d="M0 8.500H15" stroke="#000" /></Svg></CaptionButton>
        <CaptionButton aria-label="还原">
          <Svg w={16}><rect x="1" y="4" width="11" height="11" rx="2" stroke="#000" strokeWidth="1.300" /><path d="M4 1H12Q15 1 15 4V12" stroke="#000" strokeWidth="1.300" /></Svg>
        </CaptionButton>
        <CaptionButton aria-label="关闭"><Svg w={16}><path d="M1 1L15 15M15 1L1 15" stroke="#000" strokeWidth="1.300" /></Svg></CaptionButton>
      </TitleBar>
      <MenuBar>
        {menus.map((m) => <MenuButton key={m}>{m}</MenuButton>)}
      </MenuBar>
      <ToolBarRow>
        {toolGroups.map((g, i) => (
          <ToolGroup key={g.width} $width={g.width} $last={i === 3}>
            <Grip />
            {g.items.map(([label, icon]) => (
              <ToolButton key={icon} aria-label={label} $active={icon === "editWidgets"}>{icons[icon]}</ToolButton>
            ))}
          </ToolGroup>
        ))}
      </ToolBarRow>

      <Workspace>
        <Dock $width={304}>
          <DockHeader name="Widget Box" />
          <Filter $left placeholder="Filter" aria-label="Filter widgets" />
          <Frame>
            <Categories>
              {categories.map((c, i) => (
                <section key={c.name}>
                  <Category><Chevron /><span>{c.name}</span></Category>
                  <WidgetList $gap={i < 3}>
                    {c.items.map(([icon, label]) => (
                      <WidgetItem key={label}>{widgetIcons[icon]}<span>{label}</span></WidgetItem>
                    ))}
                  </WidgetList>
                </section>
              ))}
            </Categories>
            <ThinScroll />
          </Frame>
        </Dock>

        <Mdi>
          <FormWindow>
            <FormTitle>
              <Svg w={25}>
                <rect width="25" height="25" rx="2" fill="#64b032" />
                <text x="2" y="19" fontFamily="Open Sans" fontWeight="700" fontSize="17" fill="#fff">Qt</text>
              </Svg>
              <FormName>MainWindow - music_play.ui</FormName>
              <FormButton aria-label="最小化窗体">
                <Svg w={16} h={8}><rect x="1" y="1" width="14" height="6" rx="1" fill="#f4f4f4" stroke="#555b66" strokeWidth="1.400" /></Svg>
              </FormButton>
              <FormButton $close aria-label="关闭窗体">
                <Svg w={16} h={14}>
                  <path d="M3 2L13 12M13 2L3 12" stroke="#5b5560" strokeWidth="5.500" /><path d="M3 2L13 12M13 2L3 12" stroke="#f6f6f6" strokeWidth="3" />
                </Svg>
              </FormButton>
            </FormTitle>
            <FormMenu><FormMenuItem>在这里输入</FormMenuItem></FormMenu>
            <Canvas>
              <PlacedWidget>
                <FormPushButton>最小化到托盘</FormPushButton>
                {spots.map(([x, y]) => <Handle key={x + y} $x={x} $y={y} />)}
              </PlacedWidget>
            </Canvas>
            <FormStatus>
              <Svg w={14} h={14}><path d="M10 0H13V3H10ZM10 5H13V8H10ZM5 5H8V8H5ZM10 10H13V13H10ZM5 10H8V13H5ZM0 10H3V13H0Z" fill="#bdbdbd" /></Svg>
            </FormStatus>
          </FormWindow>
        </Mdi>

        <Dock $width={645}>
          <DockHeader name="对象查看器" cjk />
          <Filter placeholder="Filter" aria-label="Filter objects" />
          <Frame>
            <TreeArea>
              <Tree>
                <thead><tr><th>对象</th><th>类</th></tr></thead>
                <tbody>
                  {nodes.map((n) => (
                    <TreeRow key={n.name} $tint={n.tint} $tall={n.icon}>
                      <td>
                        <NodeCell $depth={n.open ? n.depth : n.depth + 1} $tall={n.icon}>
                          {n.open && <Toggle aria-label="折叠"><Chevron /></Toggle>}
                          <NodeLabel $tint={n.tint}>
                            {n.icon && <Svg w={25} h={25} box="0 0 36 36"><Cells blue list={broken} /><Stop x={25} y={25} r={10} red /></Svg>}
                            {n.name}
                          </NodeLabel>
                        </NodeCell>
                      </td>
                      <td>{n.cls}</td>
                    </TreeRow>
                  ))}
                </tbody>
              </Tree>
            </TreeArea>
            <ArrowScroll>
              <Svg w={12} h={10}><path d="M6 0L12 10H0Z" fill="#a3a3a3" /></Svg>
              <Svg w={12} h={10}><path d="M6 10L12 0H0Z" fill="#a3a3a3" /></Svg>
            </ArrowScroll>
          </Frame>
          <Tabs>
            <Tab>动作编辑器</Tab>
            <Tab>信号/槽编辑器</Tab>
            <Tab>属性编辑器</Tab>
            <Tab $on>对象查看器</Tab>
          </Tabs>
        </Dock>
      </Workspace>

      <TaskBar>
        <span />
        <Pinned>
          {Object.entries(taskIcons).map(([name, icon], i) => (
            <TaskButton key={name} aria-label={name} $active={name === "Designer"} $running={i > 1}>{icon}</TaskButton>
          ))}
        </Pinned>
        <Tray>
          <TrayButton $w={48} aria-label="显示隐藏的图标"><Svg w={18} h={10}><path d="M1 9L9 1L17 9" stroke="#111" strokeWidth="1.500" /></Svg></TrayButton>
          <TrayButton $w={48} aria-label="搜狗输入法">
            <Svg w={22} h={24}><path d="M8 0C-3 5 -2 17 8 20C13 20 13 15 9 13C5 9 6 4 8 0Z" fill="#e0230f" /><path d="M12 4C9 9 17 12 15 18Q15 21 13 24C24 20 24 6 12 4Z" fill="#0b0b0b" /></Svg>
          </TrayButton>
          <TrayButton $w={48}>英</TrayButton>
          <TrayButton $w={48} aria-label="网络">
            <Svg w={24} h={18}>
              <path d="M1 8Q12 -5 23 8" stroke="#a9b8a6" strokeWidth="1.500" /><path d="M4 11Q12 0 20 11" stroke="#a9b8a6" strokeWidth="1.500" /><path d="M7 13Q12 6 17 13" stroke="#111" strokeWidth="1.800" /><circle cx="12" cy="15.500" r="2.200" fill="#111" />
            </Svg>
          </TrayButton>
          <TrayButton $w={24} aria-label="音量">
            <Svg w={24} h={20}><path d="M1 7H5L10 2V18L5 13H1Z" stroke="#111" strokeWidth="1.500" /><path d="M13 6Q16 10 13 14M16 4Q20 10 16 16" stroke="#111" strokeWidth="1.500" /><path d="M19 1Q25 10 19 19" stroke="#a9b8a6" strokeWidth="1.300" /></Svg>
          </TrayButton>
          <TrayButton $w={48} aria-label="电池">
            <Svg w={24} h={20}><path d="M2 0V3M6 0V3M0 3H8V6Q8 9 4 9Q0 9 0 6ZM4 8V18" stroke="#111" strokeWidth="1.600" fill="#111" /><path d="M10 4H19Q21 4 21 6V15Q21 17 19 17H7Q6 17 6 15V11" stroke="#111" strokeWidth="1.600" /><path d="M10 7H19V15H8V11Q10 10 10 7ZM22 8H24V13H22Z" fill="#111" /></Svg>
          </TrayButton>
          <Clock>18:58<br />2022/6/4</Clock>
          <Badge>4</Badge>
        </Tray>
      </TaskBar>
    </Screen>
  );
}
